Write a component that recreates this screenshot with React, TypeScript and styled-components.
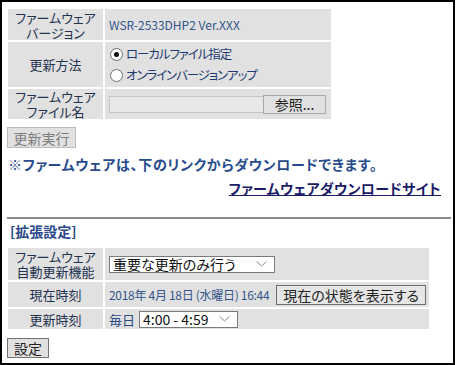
import styled, { createGlobalStyle } from 'styled-components';

const GlobalStyle = createGlobalStyle`
  html, body {
    margin: 0;
    padding: 0;
    background: #fff;
  }
  body {
    font-family: "Noto Sans CJK JP", "Noto Sans", sans-serif;
    font-feature-settings: "palt";
  }
`;

const Frame = styled.div`
  box-sizing: border-box;
  width: 455px;
  height: 365px;
  border: 2px solid #000;
  padding: 7px 6px 0;
`;

const FormGrid = styled.div<{ $width: number; $rows: string }>`
  display: grid;
  grid-template-columns: 95px 1fr;
  grid-template-rows: ${(p) => p.$rows};
  gap: 2px;
  width: ${(p) => p.$width}px;
`;

const Label = styled.div`
  background: #e1e1e1;
  display: flex;
  align-items: center;
  justify-content: center;
  text-align: center;
  font-size: 13px;
  line-height: 15px;
  color: #23324f;
`;

const Value = styled.div`
  background: #e1e1e1;
  display: flex;
  align-items: center;
  gap: 4px;
  padding-left: 4px;
  font-size: 12px;
  color: #33558a;
  white-space: nowrap;
`;

const DateText = styled.span`
  font-size: 12px;
  letter-spacing: -0.3px;
`;

const RadioList = styled.div`
  display: flex;
  flex-direction: column;
  gap: 3px;
  padding-left: 1px;
`;

const RadioLabel = styled.label`
  display: flex;
  align-items: center;
  gap: 3px;
  font-size: 12.5px;
  letter-spacing: -1.1px;
  line-height: 18px;
  color: #1e3a70;
`;

const Radio = styled.span<{ $checked?: boolean }>`
  box-sizing: border-box;
  width: 13px;
  height: 13px;
  border-radius: 50%;
  border: 1px solid #6e6e6e;
  background: #fff;
  display: grid;
  place-items: center;
  &::after {
    content: '';
    width: 5px;
    height: 5px;
    border-radius: 50%;
    background: ${(p) => (p.$checked ? '#111' : 'transparent')};
  }
`;

const FileBox = styled.div`
  box-sizing: border-box;
  width: 155px;
  height: 17px;
  background: #e8e8e8;
  border: 1px solid #c4c4c4;
`;

const Button = styled.button<{ $disabled?: boolean }>`
  box-sizing: border-box;
  margin: 0;
  padding: 0 6px;
  font-family: inherit;
  font-feature-settings: "palt";
  font-size: 14px;
  line-height: 16px;
  white-space: nowrap;
  color: ${(p) => (p.$disabled ? '#7c7c7c' : '#222')};
  background: #e1e1e1;
  border: 1px solid ${(p) => (p.$disabled ? '#bcbcbc' : '#727272')};
  border-radius: 0;
`;

const BrowseButton = styled(Button)`
  width: 63px;
  height: 19px;
  margin-left: -5px;
  padding: 0;
  border-color: #a8a8a8;
`;

const RunButton = styled(Button)`
  display: block;
  width: 69px;
  height: 21px;
  margin: 8px 0 0 -1px;
  padding: 0;
`;

const Notice = styled.p`
  margin: 7px 0 0;
  font-size: 14px;
  line-height: 18px;
  letter-spacing: 0.7px;
  font-weight: bold;
  color: #274b8c;
`;

const LinkRow = styled.div`
  display: flex;
  justify-content: flex-end;
  padding-right: 6px;
  margin-top: 7px;
`;

const DownloadLink = styled.a`
  font-size: 14px;
  line-height: 16px;
  letter-spacing: 0.4px;
  font-weight: bold;
  color: #1b1b66;
  text-decoration: underline;
`;

const Rule = styled.hr`
  margin: 21px -4px 0 -1px;
  border: none;
  border-top: 2px solid #8a8a8a;
`;

const SectionTitle = styled.h2`
  margin: 3px 0 8px 2px;
  font-size: 14px;
  line-height: 18px;
  font-weight: bold;
  color: #2a4a8a;
`;

const SelectWrap = styled.div<{ $width: number }>`
  position: relative;
  width: ${(p) => p.$width}px;
`;

const Select = styled.select`
  box-sizing: border-box;
  width: 100%;
  height: 17px;
  appearance: none;
  margin: 0;
  padding: 0 0 0 3px;
  font-family: inherit;
  font-feature-settings: "palt";
  font-size: 14px;
  line-height: 15px;
  color: #111;
  background: #fff;
  border: 1px solid #7a7a7a;
  border-radius: 0;
`;

const Chevron = styled.svg`
  position: absolute;
  right: 8px;
  top: 5px;
  pointer-events: none;
`;

const StatusButton = styled(Button)`
  height: 20px;
  margin-left: 3px;
  padding: 0 6px;
  border-color: #6e6e6e;
  background: #e6e6e6;
`;

const Daily = styled.span`
  font-size: 13px;
  color: #2a4a80;
`;

const SubmitButton = styled(Button)`
  display: block;
  width: 42px;
  height: 20px;
  margin: 9px 0 0 -1px;
  padding: 0;
`;

const DropDown = ({ value, width }: { value: string; width: number }) => (
  <SelectWrap $width={width}>
    <Select defaultValue={value}>
      <option>{value}</option>
    </Select>
    <Chevron width="11" height="6" viewBox="0 0 11 6">
      <path d="M0.5 0.5 L5.5 5 L10.5 0.5" fill="none" stroke="#8a8a8a" strokeWidth="1" />
    </Chevron>
  </SelectWrap>
);

export default function App() {
  return (
    <Frame>
      <GlobalStyle />
      <FormGrid $width={323} $rows="31px 45px 30px">
        <Label>
          ファームウェア
          <br />
          バージョン
        </Label>
        <Value>WSR-2533DHP2 Ver.XXX</Value>
        <Label>更新方法</Label>
        <Value>
          <RadioList>
            <RadioLabel>
              <Radio $checked />
              ローカルファイル指定
            </RadioLabel>
            <RadioLabel>
              <Radio />
              オンラインバージョンアップ
            </RadioLabel>
          </RadioList>
        </Value>
        <Label>
          ファームウェア
          <br />
          ファイル名
        </Label>
        <Value>
          <FileBox />
          <BrowseButton>参照...</BrowseButton>
        </Value>
      </FormGrid>

      <RunButton $disabled>更新実行</RunButton>
      <Notice>※ファームウェアは、下のリンクからダウンロードできます。</Notice>
      <LinkRow>
        <DownloadLink href="#">ファームウェアダウンロードサイト</DownloadLink>
      </LinkRow>

      <Rule />
      <SectionTitle>[拡張設定]</SectionTitle>

      <FormGrid $width={421} $rows="32px 25px 20px">
        <Label>
          ファームウェア
          <br />
          自動更新機能
        </Label>
        <Value>
          <DropDown value="重要な更新のみ行う" width={166} />
        </Value>
        <Label>現在時刻</Label>
        <Value>
          <DateText>2018年 4月 18日 (水曜日) 16:44</DateText>
          <StatusButton>現在の状態を表示する</StatusButton>
        </Value>
        <Label>更新時刻</Label>
        <Value>
          <Daily>毎日</Daily>
          <DropDown value="4:00 - 4:59" width={99} />
        </Value>
      </FormGrid>

      <SubmitButton>設定</SubmitButton>
    </Frame>
  );
}
